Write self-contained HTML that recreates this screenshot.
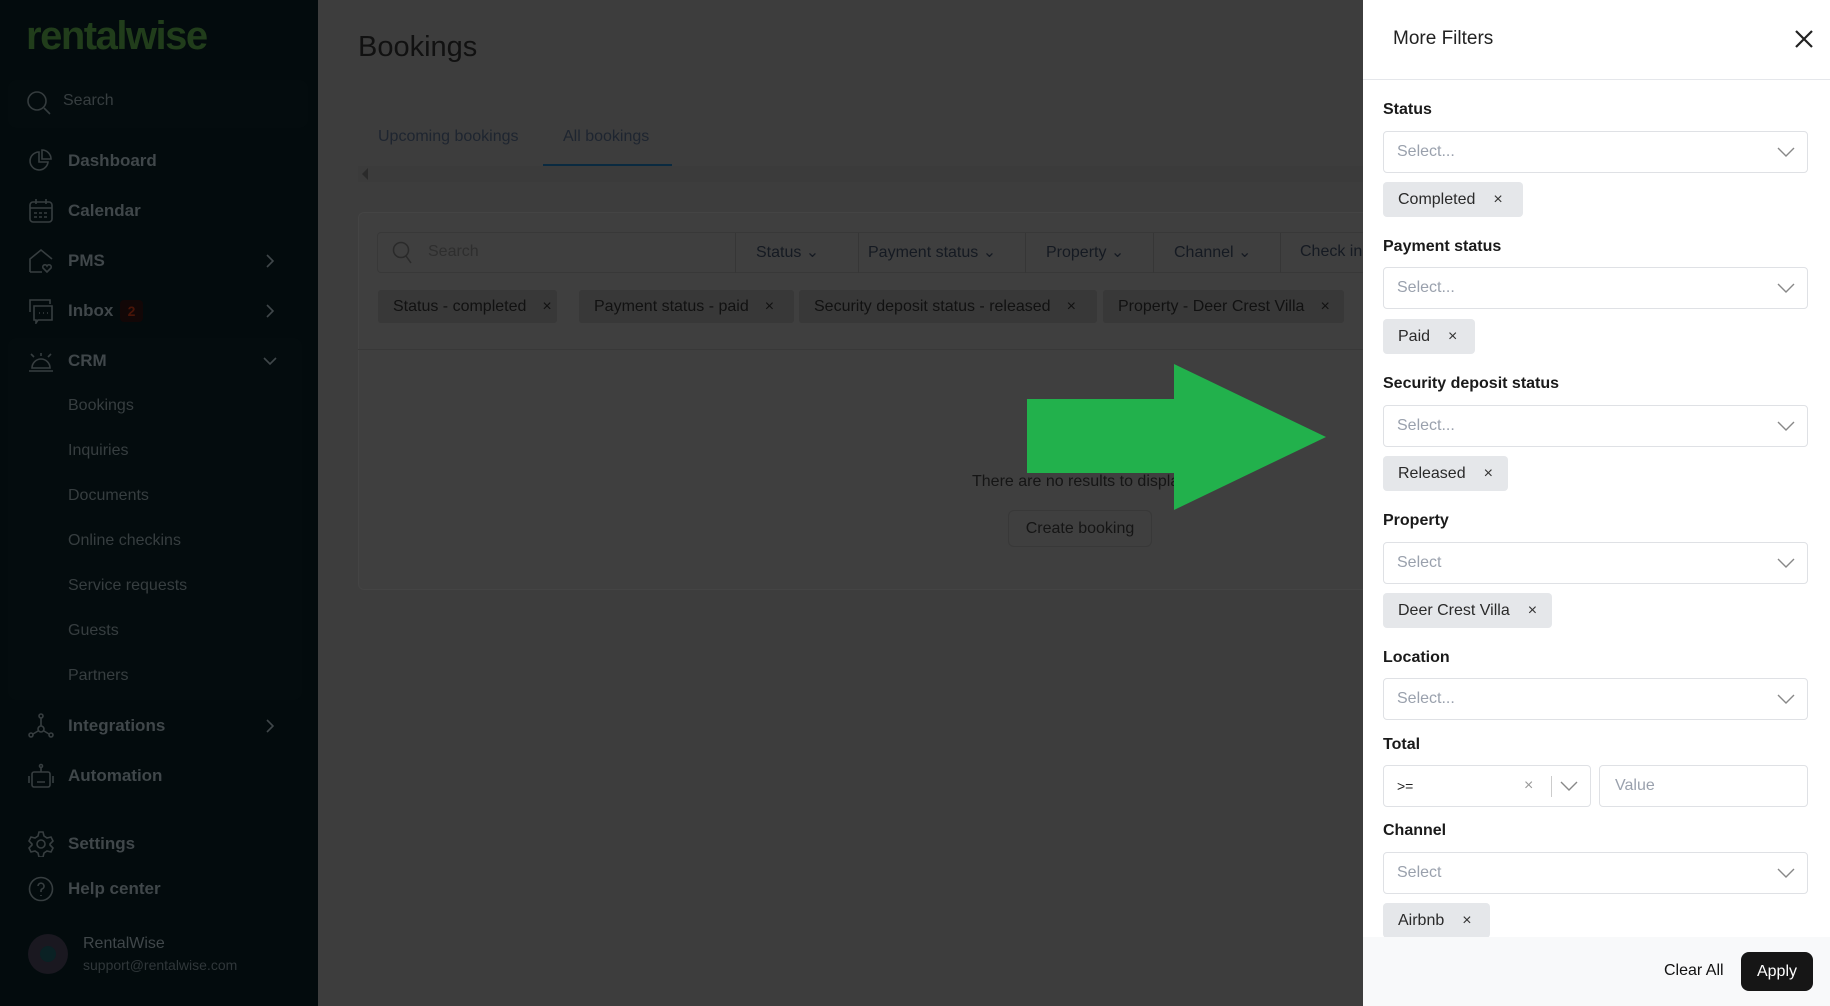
<!DOCTYPE html>
<html><head><meta charset="utf-8"><style>
*{box-sizing:border-box;margin:0;padding:0}
body{width:1830px;height:1006px;position:relative;overflow:hidden;background:#3d3d3d;font-family:"Liberation Sans",sans-serif}
.a{position:absolute;white-space:nowrap}
.side{left:0;top:0;width:318px;height:1006px;background:#030b0d}
.nav{left:68px;font-size:17px;color:#40474a;font-weight:bold;transform:translateY(-50%)}
.sub{left:68px;font-size:16px;color:#373e40;transform:translateY(-50%)}
.ic{left:28px;width:26px;height:26px;transform:translateY(-50%)}
.chev{left:264px;transform:translateY(-50%)}
.panel{left:1363px;top:0;width:467px;height:1006px;background:#fff}
.lbl{left:1383px;font-size:16px;color:#1a1a1a;font-weight:bold;transform:translateY(-50%)}
.sel{left:1383px;width:425px;height:42px;border:1px solid #dfe1e5;border-radius:4px;background:#fff}
.sel span{position:absolute;left:13px;top:11px;font-size:16px;color:#9aa1ad}
.sel svg{position:absolute;right:12px;top:14px}
.chip{left:1383px;height:35px;background:#e5e7ea;border-radius:4px;font-size:16px;color:#2a2a2a;padding:9px 15px;line-height:17px}
.chip b{font-weight:normal;margin-left:18px;color:#333}
.fchip{top:290px;height:33px;background:#383838;border-radius:3px;font-size:16px;color:#111;padding:8px 15px;line-height:17px}
.fchip b{font-weight:normal;margin-left:16px}
.flab{top:252px;font-size:16px;color:#151a22;transform:translateY(-50%)}
.vd{top:233px;width:1px;height:40px;background:#363636}
</style></head><body>
<div class="a side"></div>
<div class="a" style="left:26px;top:14px;font-size:40px;font-weight:bold;color:#213d1b;letter-spacing:-1.5px">rentalwise</div>
<div class="a" style="left:8px;top:80px;width:300px;height:48px;background:#040c0e;border-radius:8px"></div>
<svg class="a" style="left:26px;top:90px" width="26" height="26" viewBox="0 0 26 26" fill="none" stroke="#353c3e" stroke-width="1.6"><circle cx="11" cy="11" r="9"/><path d="M18 18l6 6"/></svg>
<div class="a sub" style="left:63px;top:101px;font-weight:normal">Search</div>

<svg class="a ic" style="top:161px" viewBox="0 0 26 26" fill="none" stroke="#373e40" stroke-width="1.6"><path d="M11 4a9 9 0 1 0 9 10h-9z"/><path d="M14 2v9h9a9 9 0 0 0-9-9z"/></svg>
<div class="a nav" style="top:161px">Dashboard</div>
<svg class="a ic" style="top:211px" viewBox="0 0 26 26" fill="none" stroke="#373e40" stroke-width="1.6"><rect x="2" y="4" width="22" height="20" rx="3"/><path d="M2 10h22M8 1v5M18 1v5M6 15h3M11 15h3M16 15h3M6 19h3M11 19h3M16 19h3"/></svg>
<div class="a nav" style="top:211px">Calendar</div>
<svg class="a ic" style="top:261px" viewBox="0 0 26 26" fill="none" stroke="#373e40" stroke-width="1.6"><path d="M2 24V11l11-9 11 9M2 24h12"/><path d="M19 24l-4-4a2 2 0 0 1 4-2 2 2 0 0 1 4 2z"/></svg>
<div class="a nav" style="top:261px">PMS</div>
<svg class="a chev" style="top:261px" width="12" height="14" viewBox="0 0 12 14" fill="none" stroke="#40474a" stroke-width="1.6"><path d="M3 1l6 6-6 6"/></svg>
<svg class="a ic" style="top:311px" viewBox="0 0 26 26" fill="none" stroke="#373e40" stroke-width="1.6"><path d="M2 14V2h20v4M6 8h18v14H10l-2 3v-3H6z"/><path d="M11 15h1M15 15h1M19 15h1"/></svg>
<div class="a nav" style="top:311px">Inbox</div>
<div class="a" style="left:120px;top:300px;width:23px;height:22px;background:#120707;border-radius:4px;color:#4a1508;font-size:14px;font-weight:bold;text-align:center;line-height:22px">2</div>
<svg class="a chev" style="top:311px" width="12" height="14" viewBox="0 0 12 14" fill="none" stroke="#40474a" stroke-width="1.6"><path d="M3 1l6 6-6 6"/></svg>
<div class="a" style="left:8px;top:338px;width:294px;height:362px;background:#040c0e;border-radius:8px"></div>
<svg class="a ic" style="top:361px" viewBox="0 0 26 26" fill="none" stroke="#373e40" stroke-width="1.6"><path d="M4 20a9 9 0 0 1 18 0zM1 23h24M13 8V5M3 6l3 3M23 6l-3 3"/></svg>
<div class="a nav" style="top:361px">CRM</div>
<svg class="a" style="left:263px;top:355px" width="14" height="12" viewBox="0 0 14 12" fill="none" stroke="#40474a" stroke-width="1.6"><path d="M1 3l6 6 6-6"/></svg>
<div class="a sub" style="top:406px">Bookings</div>
<div class="a sub" style="top:451px">Inquiries</div>
<div class="a sub" style="top:496px">Documents</div>
<div class="a sub" style="top:541px">Online checkins</div>
<div class="a sub" style="top:586px">Service requests</div>
<div class="a sub" style="top:631px">Guests</div>
<div class="a sub" style="top:676px">Partners</div>
<svg class="a ic" style="top:726px" viewBox="0 0 26 26" fill="none" stroke="#373e40" stroke-width="1.6"><circle cx="13" cy="3" r="2"/><circle cx="3" cy="22" r="2"/><circle cx="23" cy="22" r="2"/><circle cx="13" cy="16" r="3"/><path d="M13 5v8M5 21l5-3M21 21l-5-3"/></svg>
<div class="a nav" style="top:726px">Integrations</div>
<svg class="a chev" style="top:726px" width="12" height="14" viewBox="0 0 12 14" fill="none" stroke="#40474a" stroke-width="1.6"><path d="M3 1l6 6-6 6"/></svg>
<svg class="a ic" style="top:776px" viewBox="0 0 26 26" fill="none" stroke="#373e40" stroke-width="1.6"><rect x="4" y="9" width="18" height="15" rx="2"/><path d="M13 9V4M1 13v7M25 13v7M9 19h8"/><circle cx="13" cy="3" r="1.5"/></svg>
<div class="a nav" style="top:776px">Automation</div>
<svg class="a ic" style="top:844px" viewBox="0 0 26 26" fill="none" stroke="#373e40" stroke-width="1.6"><circle cx="13" cy="13" r="4"/><path d="M11 1h4l1 4 3 2 4-1 2 4-3 3v1l3 3-2 4-4-1-3 2-1 4h-4l-1-4-3-2-4 1-2-4 3-3v-1l-3-3 2-4 4 1 3-2z"/></svg>
<div class="a nav" style="top:844px">Settings</div>
<svg class="a ic" style="top:889px" viewBox="0 0 26 26" fill="none" stroke="#373e40" stroke-width="1.6"><circle cx="13" cy="13" r="11.5"/><path d="M10 10a3 3 0 1 1 4 3c-1 .5-1 1-1 3M13 19v1"/></svg>
<div class="a nav" style="top:889px">Help center</div>
<div class="a" style="left:28px;top:934px;width:40px;height:40px;border-radius:50%;background:#1a1820"></div>
<div class="a" style="left:40px;top:946px;width:16px;height:16px;border-radius:50%;background:#0a2124"></div>
<div class="a" style="left:83px;top:935px;font-size:16px;color:#40474a">RentalWise</div>
<div class="a" style="left:83px;top:957px;font-size:14px;color:#30373a">support@rentalwise.com</div>

<div class="a" style="left:358px;top:31px;font-size:29px;color:#111">Bookings</div>
<div class="a" style="left:378px;top:128px;font-size:16px;color:#1e2530">Upcoming bookings</div>
<div class="a" style="left:563px;top:128px;font-size:16px;color:#1e2530">All bookings</div>
<div class="a" style="left:543px;top:164px;width:129px;height:2px;background:#0a2a40"></div>
<div class="a" style="left:358px;top:166px;width:1010px;height:16px;background:#3b3b3b"></div>
<div class="a" style="left:362px;top:168px;width:0;height:0;border:6px solid transparent;border-right-color:#2a2a2a;border-left:0"></div>

<div class="a" style="left:358px;top:212px;width:1020px;height:378px;background:#3f3f3f;border:1px solid #444;border-radius:6px"></div>
<div class="a" style="left:377px;top:232px;width:1000px;height:41px;border:1px solid #383838;border-radius:4px"></div>
<svg class="a" style="left:392px;top:241px" width="22" height="24" viewBox="0 0 22 24" fill="none" stroke="#2a2a2a" stroke-width="1.5"><circle cx="9" cy="9" r="7.5"/><path d="M14 15l5 7"/></svg>
<div class="a flab" style="left:428px;color:#2e2e2e">Search</div>
<div class="a vd" style="left:735px"></div><div class="a vd" style="left:858px"></div><div class="a vd" style="left:1025px"></div><div class="a vd" style="left:1153px"></div><div class="a vd" style="left:1280px"></div>
<div class="a flab" style="left:756px">Status ⌄</div>
<div class="a flab" style="left:868px">Payment status ⌄</div>
<div class="a flab" style="left:1046px">Property ⌄</div>
<div class="a flab" style="left:1174px">Channel ⌄</div>
<div class="a flab" style="left:1300px">Check in</div>
<div class="a fchip" style="left:378px;width:179px">Status - completed<b>×</b></div>
<div class="a fchip" style="left:579px;width:215px">Payment status - paid<b>×</b></div>
<div class="a fchip" style="left:799px;width:298px">Security deposit status - released<b>×</b></div>
<div class="a fchip" style="left:1103px;width:241px">Property - Deer Crest Villa<b>×</b></div>
<div class="a" style="left:358px;top:349px;width:1010px;height:1px;background:#383838"></div>
<div class="a" style="left:972px;top:473px;font-size:16px;color:#151515">There are no results to display</div>
<div class="a" style="left:1008px;top:510px;width:144px;height:37px;border:1px solid #383838;border-radius:6px;font-size:16px;color:#151515;text-align:center;line-height:35px">Create booking</div>
<svg class="a" style="left:1027px;top:364px" width="300" height="146" viewBox="0 0 300 146"><path d="M0 35H147V0L299 73 147 146V109H0z" fill="#22b14c"/></svg>

<div class="a panel"></div>
<div class="a" style="left:1393px;top:28px;font-size:19px;color:#222">More Filters</div>
<svg class="a" style="left:1795px;top:30px" width="18" height="18" viewBox="0 0 18 18" stroke="#222" stroke-width="2.2"><path d="M1 1l16 16M17 1L1 17"/></svg>
<div class="a" style="left:1363px;top:79px;width:467px;height:1px;background:#e5e7eb"></div>

<div class="a lbl" style="top:110px">Status</div>
<div class="a sel" style="top:131px"><span>Select...</span><svg width="18" height="12" viewBox="0 0 18 12" fill="none" stroke="#888" stroke-width="1.4"><path d="M1 2l8 8 8-8"/></svg></div>
<div class="a chip" style="top:182px;width:140px">Completed<b>×</b></div>
<div class="a lbl" style="top:247px">Payment status</div>
<div class="a sel" style="top:267px"><span>Select...</span><svg width="18" height="12" viewBox="0 0 18 12" fill="none" stroke="#888" stroke-width="1.4"><path d="M1 2l8 8 8-8"/></svg></div>
<div class="a chip" style="top:319px;width:92px">Paid<b>×</b></div>
<div class="a lbl" style="top:384px">Security deposit status</div>
<div class="a sel" style="top:405px"><span>Select...</span><svg width="18" height="12" viewBox="0 0 18 12" fill="none" stroke="#888" stroke-width="1.4"><path d="M1 2l8 8 8-8"/></svg></div>
<div class="a chip" style="top:456px;width:125px">Released<b>×</b></div>
<div class="a lbl" style="top:521px">Property</div>
<div class="a sel" style="top:542px"><span>Select</span><svg width="18" height="12" viewBox="0 0 18 12" fill="none" stroke="#888" stroke-width="1.4"><path d="M1 2l8 8 8-8"/></svg></div>
<div class="a chip" style="top:593px;width:169px">Deer Crest Villa<b>×</b></div>
<div class="a lbl" style="top:658px">Location</div>
<div class="a sel" style="top:678px"><span>Select...</span><svg width="18" height="12" viewBox="0 0 18 12" fill="none" stroke="#888" stroke-width="1.4"><path d="M1 2l8 8 8-8"/></svg></div>
<div class="a lbl" style="top:745px">Total</div>
<div class="a sel" style="top:765px;width:208px"><span style="color:#222;font-size:14px;top:12px">&gt;=</span><span style="left:140px;color:#999">×</span><div class="a" style="left:167px;top:10px;width:1px;height:21px;background:#ccc"></div><svg width="18" height="12" viewBox="0 0 18 12" fill="none" stroke="#888" stroke-width="1.4"><path d="M1 2l8 8 8-8"/></svg></div>
<div class="a sel" style="top:765px;left:1599px;width:209px"><span style="left:15px">Value</span></div>
<div class="a lbl" style="top:831px">Channel</div>
<div class="a sel" style="top:852px"><span>Select</span><svg width="18" height="12" viewBox="0 0 18 12" fill="none" stroke="#888" stroke-width="1.4"><path d="M1 2l8 8 8-8"/></svg></div>
<div class="a chip" style="top:903px;width:107px">Airbnb<b>×</b></div>
<div class="a" style="left:1363px;top:937px;width:467px;height:69px;background:#f8f9fa"></div>
<div class="a" style="left:1664px;top:962px;font-size:16px;color:#111">Clear All</div>
<div class="a" style="left:1741px;top:952px;width:72px;height:39px;background:#161616;border-radius:8px;color:#fff;font-size:16px;text-align:center;line-height:39px">Apply</div>
</body></html>
